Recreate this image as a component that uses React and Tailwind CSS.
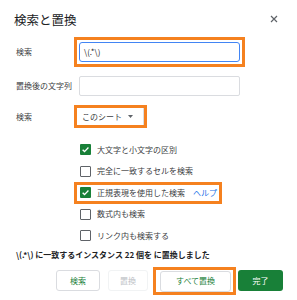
const ORANGE = "border-[#f5811f]";

function Checkbox({ checked }) {
  if (checked) {
    return (
      <span className="w-[11px] h-[11px] rounded-[1px] bg-[#188038] flex items-center justify-center shrink-0">
        <svg width="9" height="9" viewBox="0 0 12 12">
          <path d="M2.2 6.3l2.5 2.5 5.2-5.4" fill="none" stroke="#fff" strokeWidth="1.8" />
        </svg>
      </span>
    );
  }
  return <span className="w-[11px] h-[11px] rounded-[1px] border-[1.5px] border-[#5f6368] shrink-0" />;
}

function CheckRow({ checked, label, help, highlight }) {
  return (
    <div
      className={
        "ml-[74px] w-[148px] h-[21.5px] pl-[6px] flex items-center gap-[6px] text-[8px] text-[#3c4043] " +
        (highlight ? "outline-[3px] outline-solid outline-[#f5811f] outline-offset-[-3px]" : "")
      }
    >
      <Checkbox checked={checked} />
      <span className="leading-none whitespace-nowrap">{label}</span>
      {help && <span className="leading-none text-[#1a73e8] ml-[2px]">{help}</span>}
    </div>
  );
}

export default function App() {
  return (
    <div
      className="w-[297px] h-[300px] bg-white overflow-hidden flex flex-col"
      style={{ fontFamily: '"Noto Sans CJK JP", "Noto Sans", sans-serif' }}
    >
      {/* Header */}
      <div className="flex justify-between items-center pt-[10px] pl-[14px] pr-[19px] h-[29px]">
        <span className="text-[12.5px] leading-[19px] text-[#202124]">検索と置換</span>
        <svg width="8" height="8" viewBox="0 0 8 8" className="mt-[-2px]">
          <path d="M1 1l6 6M7 1L1 7" stroke="#5f6368" strokeWidth="1.2" />
        </svg>
      </div>

      {/* Find */}
      <div className="flex items-center pl-[16px] mt-[8px]">
        <span className="w-[58px] text-[8px] text-[#3c4043]">検索</span>
        <div className={"border-[3px] p-[2px] " + ORANGE}>
          <div className="w-[161px] h-[20px] border-[1.5px] border-[#4285f4] rounded-[3px] flex items-center pl-[4px] text-[8px] text-[#202124]">
            {"\\(.*\\)"}
          </div>
        </div>
      </div>

      {/* Replace */}
      <div className="flex items-center pl-[16px] mt-[9px]">
        <span className="w-[63px] text-[8px] text-[#3c4043] whitespace-nowrap">置換後の文字列</span>
        <div className="w-[161px] h-[20px] border border-[#dadce0] rounded-[2px]" />
      </div>

      {/* Scope */}
      <div className="flex items-center pl-[16px] mt-[9px]">
        <span className="w-[58px] text-[8px] text-[#3c4043]">検索</span>
        <div className={"border-[3px] " + ORANGE}>
          <div className="w-[67px] h-[17px] border-r border-[#dadce0] flex items-center pl-[5px] text-[8px] text-[#3c4043]">
            <span>このシート</span>
            <svg width="5" height="3" viewBox="0 0 5 3" className="ml-[6px]">
              <path d="M0 0h5L2.5 3z" fill="#5f6368" />
            </svg>
          </div>
        </div>
      </div>

      {/* Options */}
      <div className="flex flex-col mt-[11px]">
        <CheckRow checked label="大文字と小文字の区別" />
        <CheckRow label="完全に一致するセルを検索" />
        <CheckRow checked label="正規表現を使用した検索" help="ヘルプ" highlight />
        <CheckRow label="数式内も検索" />
        <CheckRow label="リンク内も検索する" />
      </div>

      {/* Status */}
      <div className="pl-[16px] mt-[2px] text-[8px] leading-[12px] font-bold text-[#202124] whitespace-nowrap">
        {"\\(.*\\) に一致するインスタンス 22 個を に置換しました"}
      </div>

      {/* Buttons */}
      <div className="flex items-center justify-end pr-[14px] mt-[6px] text-[8px]">
        <button className="w-[44px] h-[21px] border border-[#dadce0] rounded-[3px] text-[#188038]">検索</button>
        <button className="w-[40px] h-[21px] ml-[8px] border border-[#f1f3f4] rounded-[3px] text-[#bdc1c6]">置換</button>
        <div className={"ml-[5px] border-[3px] pl-[4px] pr-[2px] pt-[1px] " + ORANGE}>
          <button className="w-[71px] h-[21px] border border-[#dadce0] rounded-[3px] text-[#188038]">すべて置換</button>
        </div>
        <button className="w-[45px] h-[21px] ml-[2px] bg-[#188038] rounded-[3px] text-white">完了</button>
      </div>
    </div>
  );
}
